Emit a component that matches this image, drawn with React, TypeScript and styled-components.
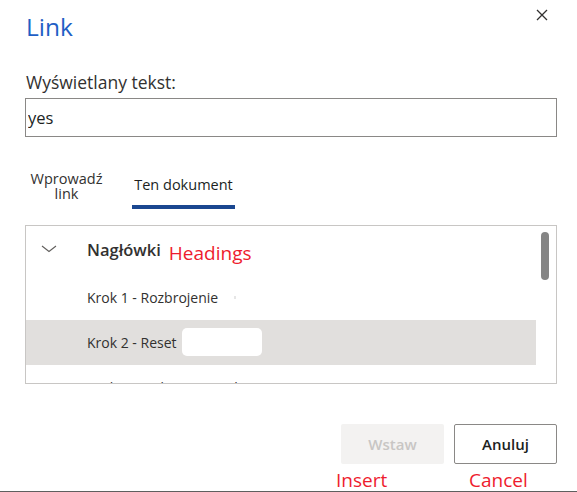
import React from "react";
import styled, { createGlobalStyle } from "styled-components";

const Global = createGlobalStyle`
  html, body { margin: 0; padding: 0; background: #ffffff; }
  * { box-sizing: border-box; }
`;

const Page = styled.div`
  position: relative;
  width: 577px;
  height: 492px;
  background: #fff;
  border-bottom: 1px solid #5f5f5f;
  font-family: "Open Sans", "Noto Sans", sans-serif;
  color: #323130;
  padding: 0 20px 0 25px;
  display: flex;
  flex-direction: column;
`;

const Header = styled.div`
  display: flex;
  justify-content: space-between;
  align-items: flex-start;
  height: 62px;
`;

const Title = styled.h1`
  margin: 11px 0 0 1px;
  font-size: 24.5px;
  line-height: 32px;
  font-weight: 400;
  color: #1f5fc5;
`;

const CloseButton = styled.button`
  border: none;
  background: transparent;
  padding: 0;
  margin: 8px 8px 0 0;
  width: 14px;
  height: 14px;
  display: flex;
  align-items: center;
  justify-content: center;
  cursor: pointer;
`;

const Label = styled.label`
  display: block;
  font-size: 17.5px;
  line-height: 22px;
  color: #323130;
  margin: 9px 0 0 1px;
`;

const TextInput = styled.input`
  display: block;
  margin-top: 5px;
  width: 100%;
  height: 39px;
  border: 1px solid #8a8886;
  border-radius: 0;
  padding: 0 2px;
  font-family: inherit;
  font-size: 16.5px;
  color: #201f1e;
  outline: none;
`;

const Tabs = styled.div`
  display: flex;
  align-items: stretch;
  margin-top: 28px;
  height: 44px;
  gap: 24px;
`;

const Tab = styled.button<{ $active?: boolean; $width: number }>`
  width: ${(p) => p.$width}px;
  border: none;
  background: transparent;
  padding: 0;
  font-family: inherit;
  font-size: 14.5px;
  line-height: 15px;
  color: ${(p) => (p.$active ? "#201f1e" : "#323130")};
  font-weight: ${(p) => (p.$active ? 500 : 400)};
  text-align: center;
  border-bottom: 4px solid ${(p) => (p.$active ? "#1a4790" : "transparent")};
  display: flex;
  align-items: center;
  justify-content: center;
  cursor: pointer;
`;

const TabText = styled.span`
  display: block;
  width: 76px;
  margin-top: 2px;
`;

const TreeBox = styled.div`
  margin-top: 16px;
  height: 160px;
  border: 1px solid #c8c6c4;
  position: relative;
  overflow: hidden;
`;

const TreeList = styled.div`
  display: flex;
  flex-direction: column;
  width: 510px;
`;

const GroupRow = styled.div`
  display: flex;
  align-items: center;
  height: 49px;
  padding-left: 15px;
`;

const Chevron = styled.span`
  display: flex;
  width: 46px;
  margin-top: -2px;
`;

const GroupTitle = styled.span`
  font-size: 16.5px;
  font-weight: 600;
  color: #323130;
  margin-top: -2px;
`;

const Note = styled.span<{ $size?: number }>`
  color: #ee1c2e;
  font-size: ${(p) => p.$size ?? 19}px;
  font-family: "Open Sans", "Noto Sans", sans-serif;
  font-weight: 400;
`;

const HeadingNote = styled(Note)`
  margin-left: 8px;
  margin-top: 6px;
`;

const ItemRow = styled.div<{ $selected?: boolean }>`
  display: flex;
  align-items: center;
  height: 45px;
  padding-left: 61px;
  font-size: 14px;
  color: #323130;
  white-space: nowrap;
  background: ${(p) => (p.$selected ? "#e1dfdd" : "transparent")};
`;

const Redaction = styled.span`
  display: inline-block;
  width: 80px;
  height: 28px;
  background: #ffffff;
  border-radius: 5px;
  margin-left: 5px;
`;

const Speck = styled.span`
  display: inline-block;
  width: 2px;
  height: 3px;
  background: #e6e6e6;
  margin-left: 16px;
`;

const Scrollbar = styled.div`
  position: absolute;
  top: 6px;
  right: 7px;
  width: 8px;
  height: 48px;
  border-radius: 4px;
  background: #858585;
`;

const Footer = styled.div`
  display: flex;
  justify-content: flex-end;
  gap: 10px;
  margin-top: 40px;
`;

const ButtonColumn = styled.div`
  display: flex;
  flex-direction: column;
`;

const Button = styled.button<{ $primary?: boolean }>`
  width: 103px;
  height: 40px;
  border-radius: 2px;
  font-family: inherit;
  font-size: 15px;
  font-weight: 600;
  border: ${(p) => (p.$primary ? "none" : "1px solid #8a8886")};
  background: ${(p) => (p.$primary ? "#f3f2f1" : "#ffffff")};
  color: ${(p) => (p.$primary ? "#c8c6c4" : "#201f1e")};
`;

const ButtonNote = styled(Note)<{ $offset: number }>`
  margin-left: ${(p) => p.$offset}px;
  line-height: 22px;
  margin-top: 5px;
`;

const ChevronIcon = () => (
  <svg width="16" height="8" viewBox="0 0 16 8" fill="none">
    <path d="M1 1 L8 6.5 L15 1" stroke="#605e5c" strokeWidth="1.1" />
  </svg>
);

const CloseIcon = () => (
  <svg width="12" height="12" viewBox="0 0 12 12" fill="none">
    <path d="M1 1 L11 11 M11 1 L1 11" stroke="#323130" strokeWidth="1.3" />
  </svg>
);

export default function App() {
  return (
    <>
      <Global />
      <Page>
        <Header>
          <Title>Link</Title>
          <CloseButton aria-label="Zamknij">
            <CloseIcon />
          </CloseButton>
        </Header>
        <Label>Wyświetlany tekst:</Label>
        <TextInput defaultValue="yes" />
        <Tabs>
          <Tab $width={83}>
            <TabText>Wprowadź link</TabText>
          </Tab>
          <Tab $active $width={103}>
            Ten dokument
          </Tab>
        </Tabs>
        <TreeBox>
          <TreeList>
            <GroupRow>
              <Chevron>
                <ChevronIcon />
              </Chevron>
              <GroupTitle>Nagłówki</GroupTitle>
              <HeadingNote>Headings</HeadingNote>
            </GroupRow>
            <ItemRow>
              Krok 1 - Rozbrojenie
              <Speck />
            </ItemRow>
            <ItemRow $selected>
              Krok 2 - Reset
              <Redaction />
            </ItemRow>
            <ItemRow>Krok 3 - Wyłączenie trybu awaryjnego</ItemRow>
          </TreeList>
          <Scrollbar />
        </TreeBox>
        <Footer>
          <ButtonColumn>
            <Button $primary disabled>
              Wstaw
            </Button>
            <ButtonNote $offset={-5}>Insert</ButtonNote>
          </ButtonColumn>
          <ButtonColumn>
            <Button>Anuluj</Button>
            <ButtonNote $offset={15}>Cancel</ButtonNote>
          </ButtonColumn>
        </Footer>
      </Page>
    </>
  );
}
